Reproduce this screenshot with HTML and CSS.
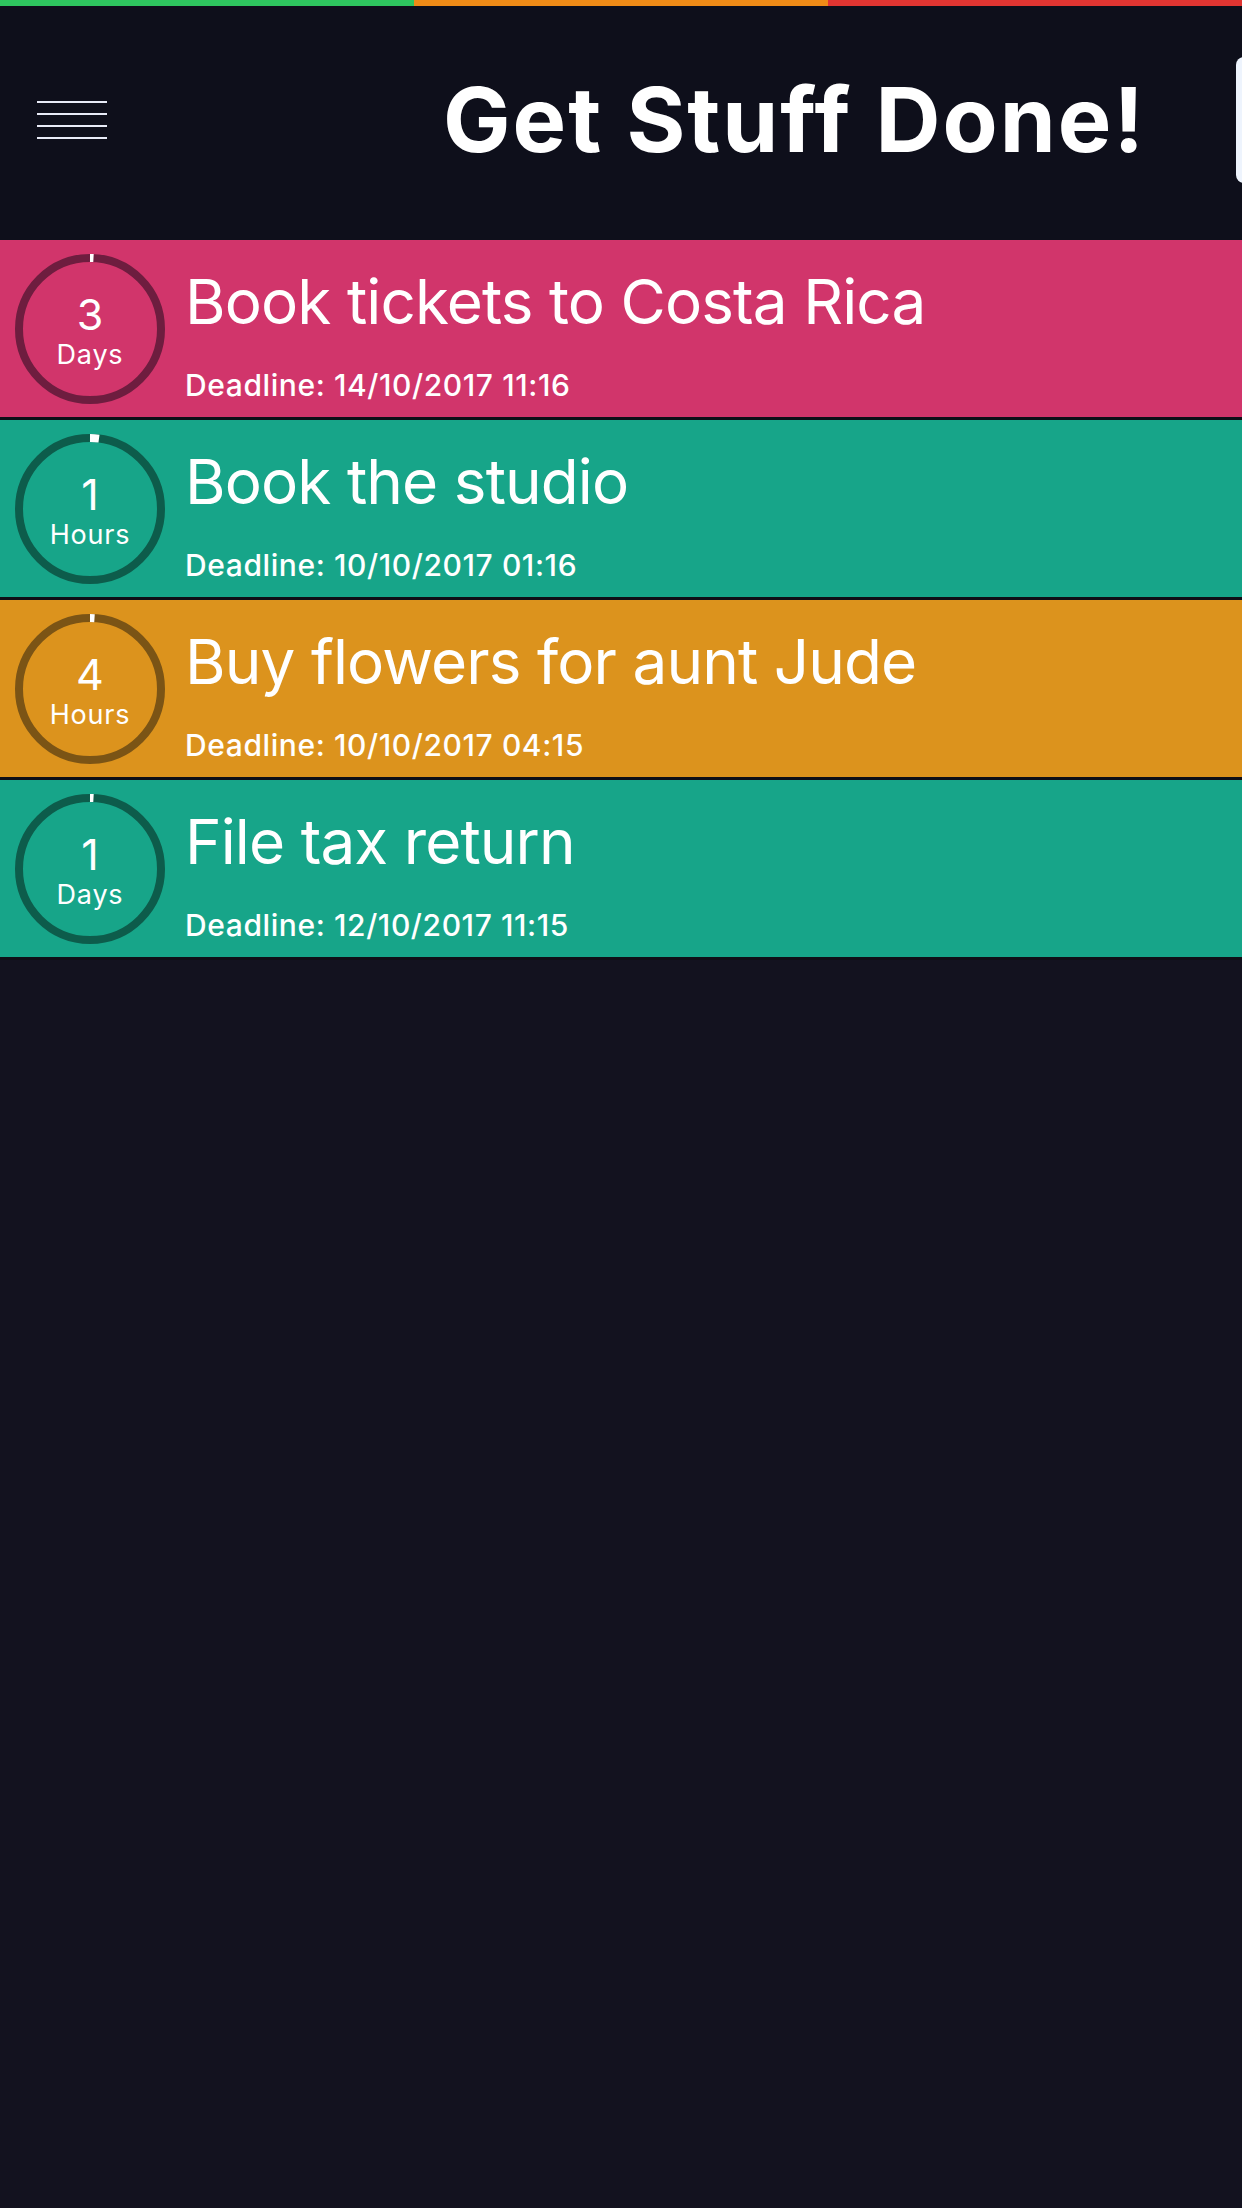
FILE: index.html
```html
<!DOCTYPE html>
<html lang="en">
<head>
    <meta charset="UTF-8">
    <meta name="viewport" content="width=device-width, initial-scale=1.0">
    <title>Get Stuff Done!</title>
    <link rel="stylesheet" href="styles.css">
</head>
<body>
    <!-- Barra de estado de colores -->
    <div class="status-bar">
        <span class="status green"></span>
        <span class="status orange"></span>
        <span class="status red"></span>
    </div>

    <div class="header">
        <div class="menu-icon">
            <span></span><span></span><span></span><span></span>
        </div>
        <h1>Get Stuff Done!</h1>
        <div class="add-button"></div>
    </div>

    <!-- Lista de tareas -->
    <div class="task-list">
        <div class="task pink">
            <div class="timer">
                <svg class="ring" viewBox="0 0 150 150">
                    <circle cx="75" cy="75" r="71" />
                    <path class="progress" d="M75 4 A71 71 0 0 1 78.5 4.1" />
                </svg>
                <div class="timer-text">
                    <div class="timer-value">3</div>
                    <div class="timer-unit">Days</div>
                </div>
            </div>
            <div class="task-info">
                <div class="task-title">Book tickets to Costa Rica</div>
                <div class="task-deadline">Deadline: 14/10/2017 11:16</div>
            </div>
        </div>

        <div class="task teal">
            <div class="timer">
                <svg class="ring" viewBox="0 0 150 150">
                    <circle cx="75" cy="75" r="71" />
                    <path class="progress" d="M75 4 A71 71 0 0 1 84 4.6" />
                </svg>
                <div class="timer-text">
                    <div class="timer-value">1</div>
                    <div class="timer-unit">Hours</div>
                </div>
            </div>
            <div class="task-info">
                <div class="task-title">Book the studio</div>
                <div class="task-deadline">Deadline: 10/10/2017 01:16</div>
            </div>
        </div>

        <div class="task orange">
            <div class="timer">
                <svg class="ring" viewBox="0 0 150 150">
                    <circle cx="75" cy="75" r="71" />
                    <path class="progress" d="M75 4 A71 71 0 0 1 79.5 4.15" />
                </svg>
                <div class="timer-text">
                    <div class="timer-value">4</div>
                    <div class="timer-unit">Hours</div>
                </div>
            </div>
            <div class="task-info">
                <div class="task-title">Buy flowers for aunt Jude</div>
                <div class="task-deadline">Deadline: 10/10/2017 04:15</div>
            </div>
        </div>

        <div class="task teal">
            <div class="timer">
                <svg class="ring" viewBox="0 0 150 150">
                    <circle cx="75" cy="75" r="71" />
                    <path class="progress" d="M75 4 A71 71 0 0 1 78.5 4.1" />
                </svg>
                <div class="timer-text">
                    <div class="timer-value">1</div>
                    <div class="timer-unit">Days</div>
                </div>
            </div>
            <div class="task-info">
                <div class="task-title">File tax return</div>
                <div class="task-deadline">Deadline: 12/10/2017 11:15</div>
            </div>
        </div>
    </div>
</body>
</html>
```

FILE: styles.css
```css
body {
    font-family: Inter, "Noto Sans", sans-serif;
    background-color: #13121f;
    color: white;
    margin: 0;
    padding: 0;
    overflow-x: hidden;
}

/* Barra superior de colores */
.status-bar {
    display: flex;
    height: 6px;
}

.status {
    flex: 1;
}

.status.green { background-color: #2ec55f; }
.status.orange { background-color: #ef8b17; }
.status.red { background-color: #e13532; }

.header {
    display: flex;
    align-items: center;
    height: 228px;
    padding-bottom: 6px;
    background-color: #0e0f1b;
    overflow: hidden;
}

.menu-icon {
    display: flex;
    flex-direction: column;
    gap: 10px;
    width: 70px;
    margin-left: 37px;
}

.menu-icon span {
    display: block;
    height: 2px;
    background-color: #e8ebf7;
}

h1 {
    margin: 0 0 0 336px;
    font-size: 90px;
    font-weight: 700;
    line-height: 1;
    letter-spacing: 2px;
    white-space: nowrap;
}

.add-button {
    flex-shrink: 0;
    width: 60px;
    height: 126px;
    margin-left: auto;
    margin-right: -54px;
    background-color: #eef4fd;
    border-radius: 8px;
}

/* Filas de tareas */
.task {
    display: flex;
    align-items: center;
    height: 177px;
    border-bottom: 3px solid #0f0f17;
}

.task.pink { background-color: #d1356b; }
.task.teal { background-color: #17a589; }
.task.orange { background-color: #dc931d; }

.timer {
    position: relative;
    flex-shrink: 0;
    width: 150px;
    height: 150px;
    margin-left: 15px;
}

.ring {
    display: block;
    width: 150px;
    height: 150px;
}

.ring circle {
    fill: none;
    stroke-width: 8;
}

.ring .progress {
    fill: none;
    stroke: white;
    stroke-width: 8;
}

.pink .ring circle { stroke: #6e1d3f; }
.teal .ring circle { stroke: #0d5c4b; }
.orange .ring circle { stroke: #7b5415; }

.timer-text {
    position: absolute;
    top: 0;
    left: 0;
    right: 0;
    bottom: 0;
    display: flex;
    flex-direction: column;
    align-items: center;
    gap: 5px;
    padding-top: 38px;
}

.timer-value {
    font-size: 43px;
    line-height: 44px;
}

.timer-unit {
    font-size: 27px;
    line-height: 28px;
    letter-spacing: 0.8px;
}

.task-info {
    align-self: flex-start;
    margin-left: 20px;
    padding-top: 31px;
}

.task-title {
    font-size: 62px;
    line-height: 62px;
    letter-spacing: -0.9px;
    white-space: nowrap;
}

.task-deadline {
    margin-top: 37px;
    font-size: 30px;
    font-weight: 500;
    line-height: 30px;
    letter-spacing: 0.6px;
}
```
